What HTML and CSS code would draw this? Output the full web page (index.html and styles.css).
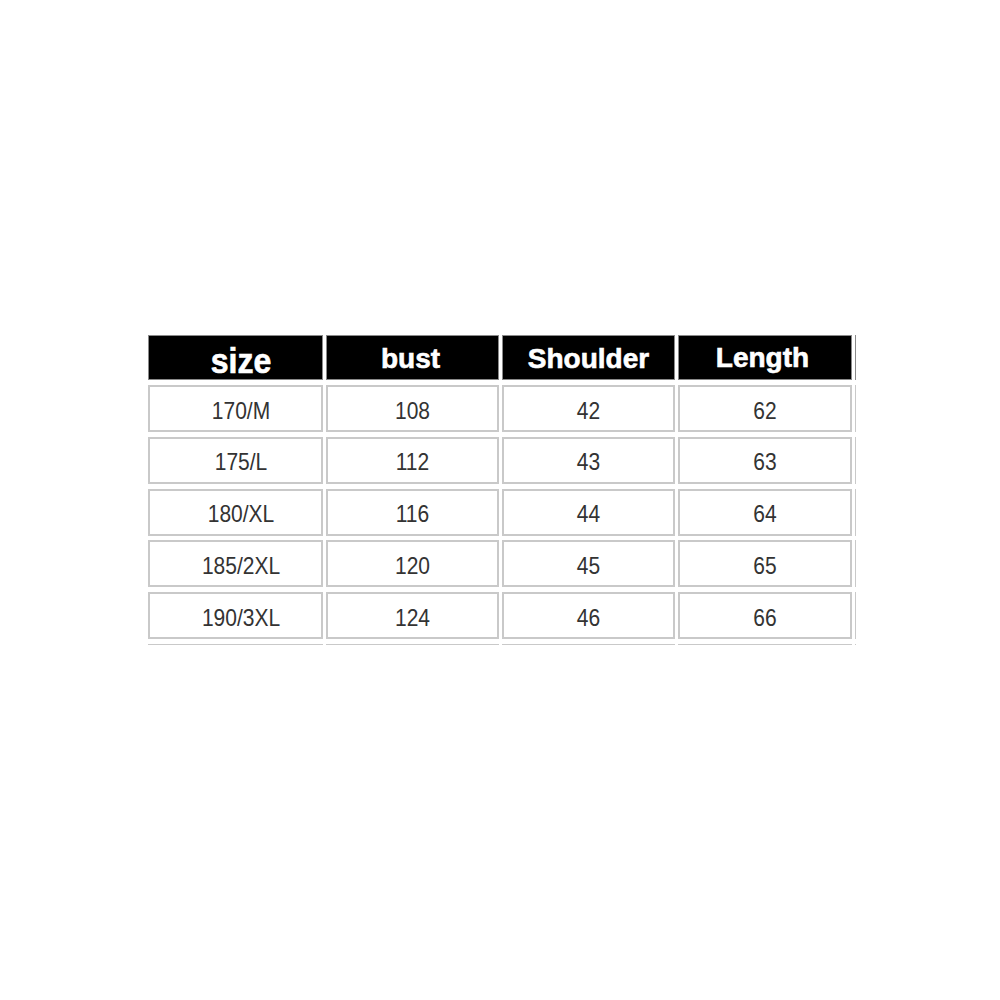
FILE: index.html
```html
<!DOCTYPE html>
<html>
<head>
<meta charset="utf-8">
<title>Size chart</title>
<link rel="stylesheet" href="styles.css">
</head>
<body>
<div class="page">
  <div class="chart">
    <div class="cell head first"><span class="h-size">size</span></div>
    <div class="cell head"><span class="h-text h-bust">bust</span></div>
    <div class="cell head"><span class="h-text">Shoulder</span></div>
    <div class="cell head"><span class="h-text h-length">Length</span></div>
    <div class="cell head"></div>

    <div class="cell first"><span class="d">170/M</span></div>
    <div class="cell"><span class="d">108</span></div>
    <div class="cell"><span class="d">42</span></div>
    <div class="cell"><span class="d">62</span></div>
    <div class="cell"></div>

    <div class="cell first"><span class="d">175/L</span></div>
    <div class="cell"><span class="d">112</span></div>
    <div class="cell"><span class="d">43</span></div>
    <div class="cell"><span class="d">63</span></div>
    <div class="cell"></div>

    <div class="cell first"><span class="d">180/XL</span></div>
    <div class="cell"><span class="d">116</span></div>
    <div class="cell"><span class="d">44</span></div>
    <div class="cell"><span class="d">64</span></div>
    <div class="cell"></div>

    <div class="cell first"><span class="d">185/2XL</span></div>
    <div class="cell"><span class="d">120</span></div>
    <div class="cell"><span class="d">45</span></div>
    <div class="cell"><span class="d">65</span></div>
    <div class="cell"></div>

    <div class="cell first"><span class="d">190/3XL</span></div>
    <div class="cell"><span class="d">124</span></div>
    <div class="cell"><span class="d">46</span></div>
    <div class="cell"><span class="d">66</span></div>
    <div class="cell"></div>

    <div class="cell"></div>
    <div class="cell"></div>
    <div class="cell"></div>
    <div class="cell"></div>
    <div class="cell"></div>
  </div>
</div>
</body>
</html>
```

FILE: styles.css
```css
html, body {
  margin: 0;
  padding: 0;
  background: #ffffff;
}

.page {
  width: 1000px;
  height: 1000px;
  padding: 335px 0 0 148px;
  box-sizing: border-box;
}

.chart {
  width: 708px;
  height: 310px;
  overflow: hidden;
  display: grid;
  grid-template-columns: 175px 173px 173px 174px 173px;
  grid-template-rows: 45.25px repeat(6, 47px);
  column-gap: 3px;
  row-gap: 4.75px;
  font-family: "Liberation Sans", Arial, sans-serif;
}

.cell {
  box-sizing: border-box;
  border: 2px solid #c9c9c9;
  background: #ffffff;
  display: flex;
  align-items: center;
  justify-content: center;
  padding-top: 4px;
}

.cell.first {
  padding-left: 11px;
}

.cell.head {
  background: #000000;
  border: 1px solid #8a8a8a;
  color: #ffffff;
  font-weight: bold;
  padding-top: 2px;
  -webkit-text-stroke: 0.6px #ffffff;
}

.h-text {
  font-size: 28px;
}

.h-bust {
  margin-right: 4px;
}

.h-length {
  margin-right: 5px;
  margin-top: -2px;
}

.h-size {
  font-size: 32px;
  display: inline-block;
  transform: scaleY(1.12);
  margin-top: 6px;
}

.d {
  display: inline-block;
  font-size: 21px;
  color: #333333;
  transform: scaleY(1.13);
}
```
